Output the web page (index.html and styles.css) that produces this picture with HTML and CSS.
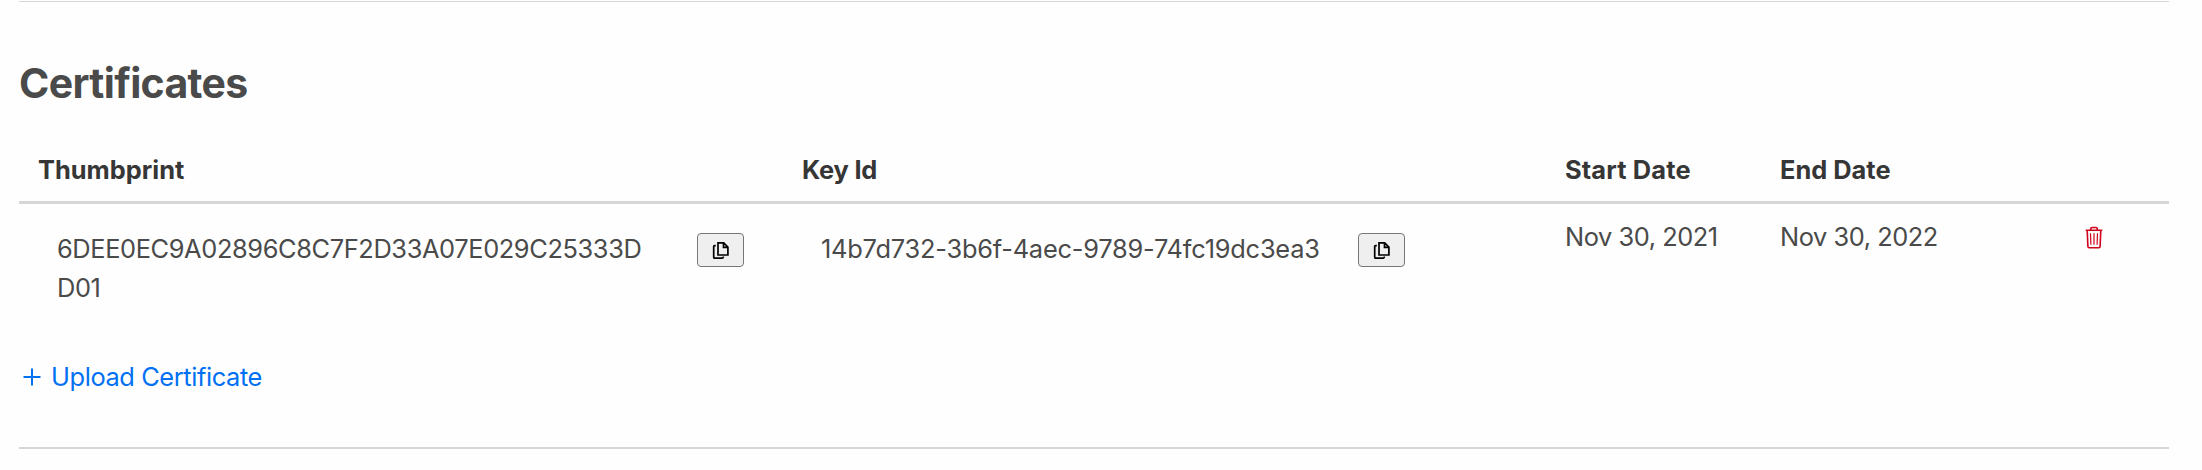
FILE: index.html
```html
<!DOCTYPE html>
<html lang="en">
<head>
<meta charset="utf-8">
<title>Certificates</title>
<link rel="stylesheet" href="styles.css">
</head>
<body>
<main class="panel">
  <h2 class="title">Certificates</h2>
  <div class="grid head">
    <div><span class="t-thumb">Thumbprint</span></div>
    <div><span class="t-key">Key Id</span></div>
    <div><span class="t-start">Start Date</span></div>
    <div><span class="t-end">End Date</span></div>
    <div></div>
  </div>
  <div class="grid row">
    <div class="copyable">
      <span class="value thumb">6DEE0EC9A02896C8C7F2D33A07E029C25333DD01</span>
      <button class="copy" aria-label="Copy thumbprint"><svg width="18" height="19" viewBox="0 0 18 19"><path d="M6 1.9H11.7L15.9 6.1V14H6ZM11.5 2V6.3H15.8M3.8 4.7H2.7Q1.7 4.7 1.7 5.7V16.2Q1.7 17.2 2.7 17.2H10.3Q11.4 17.2 11.4 15.6"/></svg></button>
    </div>
    <div class="copyable">
      <span class="value key">14b7d732-3b6f-4aec-9789-74fc19dc3ea3</span>
      <button class="copy" aria-label="Copy key id"><svg width="18" height="19" viewBox="0 0 18 19"><path d="M6 1.9H11.7L15.9 6.1V14H6ZM11.5 2V6.3H15.8M3.8 4.7H2.7Q1.7 4.7 1.7 5.7V16.2Q1.7 17.2 2.7 17.2H10.3Q11.4 17.2 11.4 15.6"/></svg></button>
    </div>
    <div class="date"><span class="start">Nov 30, 2021</span></div>
    <div class="date"><span class="end">Nov 30, 2022</span></div>
    <div class="actions"><svg class="trash" width="18" height="23" viewBox="0 0 18 23"><path class="bin" d="M.7 4.2H17.3M2.2 4.2L2.9 20.5Q3 21.7 4.2 21.7H13.8Q15 21.7 15.1 20.5L15.8 4.2M5.7 4V3Q5.7 1.5 7.2 1.5H10.8Q12.3 1.5 12.3 3V4"/><path class="slats" d="M5.5 7.3L5.9 18.7M9 7.3V18.7M12.5 7.3L12.1 18.7"/></svg></div>
  </div>
  <a class="upload"><svg width="18" height="18" viewBox="0 0 18 18"><path d="M9 .5V17.5M.5 9H17.5"/></svg><span class="t-upload">Upload Certificate</span></a>
</main>
</body>
</html>
```
FILE: styles.css
```css
body {
  margin: 0;
  background: #fefefe;
  color: #4a4a4a;
  font: 25.4px/39px Inter, "Liberation Sans", sans-serif;
}
.panel {
  box-sizing: border-box;
  width: 2150px;
  height: 448px;
  margin: 1px 0 0 19px;
  border-top: 1px solid #d6d6d6;
  border-bottom: 2px solid #d6d6d6;
}
.title {
  margin: 0;
  padding-top: 56px;
  font-size: 41px;
  line-height: 50px;
  font-weight: 700;
  letter-spacing: -.65px;
}
.grid {
  display: grid;
  grid-template-columns: 764px 763px 215px 215px 193px;
}
.head {
  box-sizing: border-box;
  height: 63px;
  margin-top: 33px;
  padding-top: 9px;
  border-bottom: 3px solid #d6d6d6;
  color: #363636;
  font-weight: 700;
}
.head > div, .date {
  padding-left: 19px;
}
.t-key { letter-spacing: -.2px; }
.t-start { letter-spacing: .15px; }
.row {
  height: 145px;
}
.copyable {
  display: flex;
  align-items: flex-start;
  padding: 25px 0 0 38px;
}
.value {
  flex: none;
  word-break: break-all;
}
.thumb { width: 595px; margin-right: 45px; letter-spacing: -.38px; }
.key { width: 502px; margin-right: 35px; letter-spacing: -.22px; }
.copy {
  display: flex;
  align-items: center;
  justify-content: center;
  box-sizing: border-box;
  width: 47px;
  height: 34px;
  margin: 4px 0 0;
  padding: 0;
  border: 1px solid #767676;
  border-radius: 4px;
  background: #efefef;
}
.copy path { fill: none; stroke: #000; stroke-width: 1.7; }
.date { padding-top: 13px; letter-spacing: -.45px; }
.actions { padding: 22px 0 0 109px; line-height: 0; }
.trash path { fill: none; stroke: #d0021b; }
.bin { stroke-width: 1.6; }
.slats { stroke-width: 1.2; }
.upload {
  display: flex;
  align-items: center;
  gap: 10px;
  padding: 8px 0 0 4px;
  color: #0070f3;
  letter-spacing: -.4px;
}
.upload path { stroke: #0070f3; stroke-width: 2; }
```
